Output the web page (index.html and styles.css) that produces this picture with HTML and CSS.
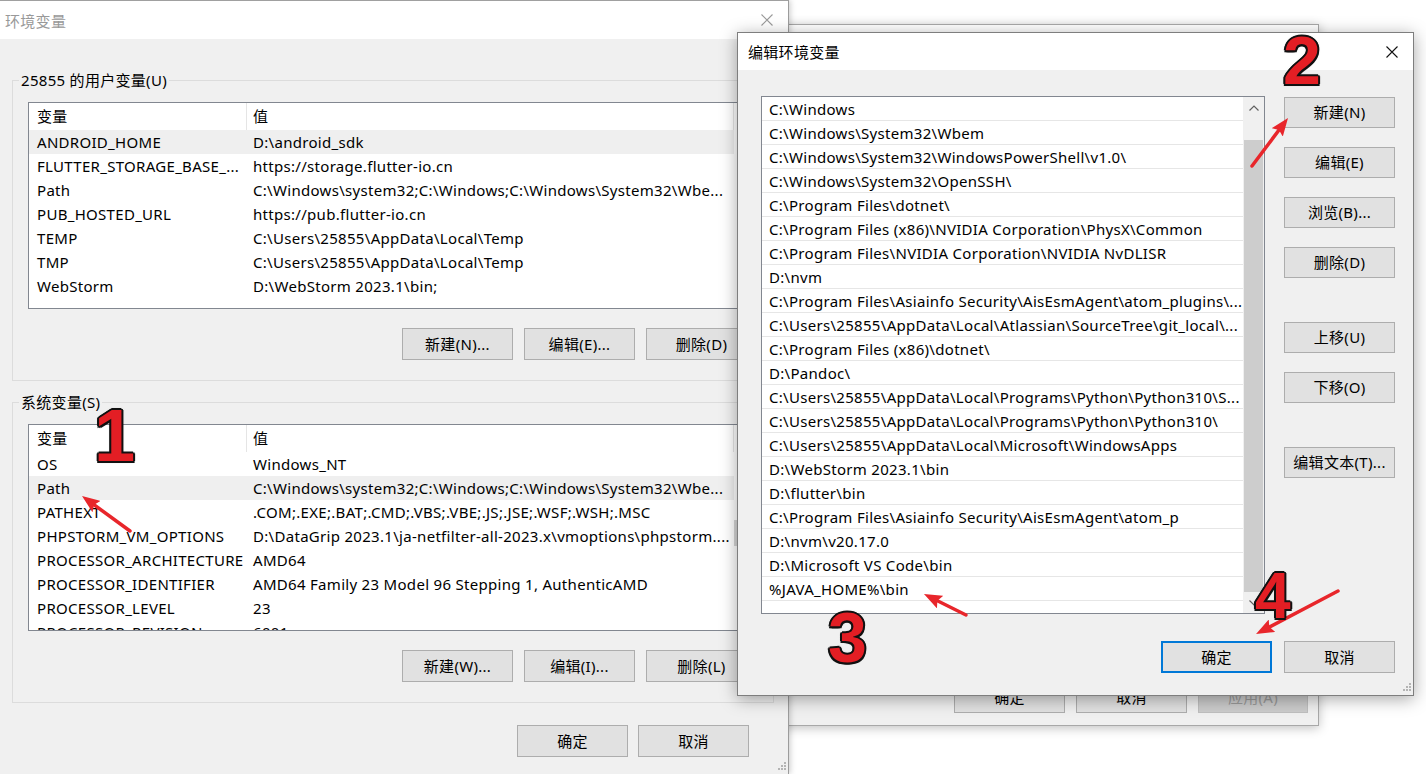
FILE: index.html
```html
<!DOCTYPE html>
<html lang="zh-CN">
<head>
<meta charset="utf-8">
<title>环境变量</title>
<link rel="stylesheet" href="styles.css">
</head>
<body>
<div class="desk">

  <section class="win win-sys">
    <div class="titlebar"></div>
    <div class="sys-body"></div>
    <div class="sys-foot">
      <button class="btn">确定</button>
      <button class="btn">取消</button>
      <button class="btn btn-disabled w110">应用(A)</button>
    </div>
  </section>

  <section class="win win-env">
    <div class="titlebar env-titlebar">
      <span class="title title-inactive">环境变量</span>
      <span class="close"><svg width="12" height="12" viewBox="0 0 12 12"><path d="M0.5 0.5 L11.5 11.5 M11.5 0.5 L0.5 11.5" stroke="#9a9a9a" stroke-width="1.1" fill="none"/></svg></span>
    </div>
    <div class="env-body">
      <div class="group">
        <div class="group-title">25855 的用户变量(U)</div>
        <div class="lv">
          <div class="lv-main">
            <div class="lv-head"><div class="c1">变量</div><div class="c2">值</div></div>
            <div class="lv-row sel"><div class="c1">ANDROID_HOME</div><div class="c2">D:\android_sdk</div></div>
            <div class="lv-row"><div class="c1">FLUTTER_STORAGE_BASE_...</div><div class="c2">https://storage.flutter-io.cn</div></div>
            <div class="lv-row"><div class="c1">Path</div><div class="c2">C:\Windows\system32;C:\Windows;C:\Windows\System32\Wbe...</div></div>
            <div class="lv-row"><div class="c1">PUB_HOSTED_URL</div><div class="c2">https://pub.flutter-io.cn</div></div>
            <div class="lv-row"><div class="c1">TEMP</div><div class="c2">C:\Users\25855\AppData\Local\Temp</div></div>
            <div class="lv-row"><div class="c1">TMP</div><div class="c2">C:\Users\25855\AppData\Local\Temp</div></div>
            <div class="lv-row"><div class="c1">WebStorm</div><div class="c2">D:\WebStorm 2023.1\bin;</div></div>
          </div>
          <div class="lv-sb"></div>
        </div>
        <div class="btnrow">
          <button class="btn">新建(N)...</button>
          <button class="btn">编辑(E)...</button>
          <button class="btn">删除(D)</button>
        </div>
      </div>

      <div class="group group-2">
        <div class="group-title">系统变量(S)</div>
        <div class="lv">
          <div class="lv-main">
            <div class="lv-head"><div class="c1">变量</div><div class="c2">值</div></div>
            <div class="lv-row"><div class="c1">OS</div><div class="c2">Windows_NT</div></div>
            <div class="lv-row sel"><div class="c1">Path</div><div class="c2">C:\Windows\system32;C:\Windows;C:\Windows\System32\Wbe...</div></div>
            <div class="lv-row"><div class="c1">PATHEXT</div><div class="c2">.COM;.EXE;.BAT;.CMD;.VBS;.VBE;.JS;.JSE;.WSF;.WSH;.MSC</div></div>
            <div class="lv-row"><div class="c1">PHPSTORM_VM_OPTIONS</div><div class="c2">D:\DataGrip 2023.1\ja-netfilter-all-2023.x\vmoptions\phpstorm....</div></div>
            <div class="lv-row"><div class="c1">PROCESSOR_ARCHITECTURE</div><div class="c2">AMD64</div></div>
            <div class="lv-row"><div class="c1">PROCESSOR_IDENTIFIER</div><div class="c2">AMD64 Family 23 Model 96 Stepping 1, AuthenticAMD</div></div>
            <div class="lv-row"><div class="c1">PROCESSOR_LEVEL</div><div class="c2">23</div></div>
            <div class="lv-row"><div class="c1">PROCESSOR_REVISION</div><div class="c2">6001</div></div>
          </div>
          <div class="lv-sb"><div class="lv-thumb"></div></div>
        </div>
        <div class="btnrow">
          <button class="btn">新建(W)...</button>
          <button class="btn">编辑(I)...</button>
          <button class="btn">删除(L)</button>
        </div>
      </div>

      <div class="env-foot">
        <button class="btn">确定</button>
        <button class="btn">取消</button>
      </div>
    </div>
    <span class="grip"><svg width="11" height="11" viewBox="0 0 11 11" fill="#b4b4b4"><rect x="9" y="1" width="2" height="2"/><rect x="6" y="4" width="2" height="2"/><rect x="9" y="4" width="2" height="2"/><rect x="3" y="7" width="2" height="2"/><rect x="6" y="7" width="2" height="2"/><rect x="9" y="7" width="2" height="2"/></svg></span>
  </section>

  <section class="win win-edit">
    <div class="titlebar edit-titlebar">
      <span class="title">编辑环境变量</span>
      <span class="close"><svg width="12" height="12" viewBox="0 0 12 12"><path d="M0.5 0.5 L11.5 11.5 M11.5 0.5 L0.5 11.5" stroke="#111" stroke-width="1.1" fill="none"/></svg></span>
    </div>
    <div class="edit-body">
      <div class="edit-top">
        <div class="plist">
          <div class="pitems">
            <div class="pitem">C:\Windows</div>
            <div class="pitem">C:\Windows\System32\Wbem</div>
            <div class="pitem">C:\Windows\System32\WindowsPowerShell\v1.0\</div>
            <div class="pitem">C:\Windows\System32\OpenSSH\</div>
            <div class="pitem">C:\Program Files\dotnet\</div>
            <div class="pitem">C:\Program Files (x86)\NVIDIA Corporation\PhysX\Common</div>
            <div class="pitem">C:\Program Files\NVIDIA Corporation\NVIDIA NvDLISR</div>
            <div class="pitem">D:\nvm</div>
            <div class="pitem">C:\Program Files\Asiainfo Security\AisEsmAgent\atom_plugins\...</div>
            <div class="pitem">C:\Users\25855\AppData\Local\Atlassian\SourceTree\git_local\...</div>
            <div class="pitem">C:\Program Files (x86)\dotnet\</div>
            <div class="pitem">D:\Pandoc\</div>
            <div class="pitem">C:\Users\25855\AppData\Local\Programs\Python\Python310\S...</div>
            <div class="pitem">C:\Users\25855\AppData\Local\Programs\Python\Python310\</div>
            <div class="pitem">C:\Users\25855\AppData\Local\Microsoft\WindowsApps</div>
            <div class="pitem">D:\WebStorm 2023.1\bin</div>
            <div class="pitem">D:\flutter\bin</div>
            <div class="pitem">C:\Program Files\Asiainfo Security\AisEsmAgent\atom_p</div>
            <div class="pitem">D:\nvm\v20.17.0</div>
            <div class="pitem">D:\Microsoft VS Code\bin</div>
            <div class="pitem">%JAVA_HOME%\bin</div>
            <div class="pitem"></div>
          </div>
          <div class="psb">
            <div class="sb-arrow"><svg width="10" height="6" viewBox="0 0 10 6"><path d="M0.5 5.5 L5 1 L9.5 5.5" stroke="#606060" stroke-width="1.2" fill="none"/></svg></div>
            <div class="sb-track"><div class="sb-thumb"></div></div>
            <div class="sb-arrow"><svg width="10" height="6" viewBox="0 0 10 6"><path d="M0.5 0.5 L5 5 L9.5 0.5" stroke="#606060" stroke-width="1.2" fill="none"/></svg></div>
          </div>
        </div>
        <div class="bcol">
          <button class="btn btn-col">新建(N)</button>
          <button class="btn btn-col">编辑(E)</button>
          <button class="btn btn-col">浏览(B)...</button>
          <button class="btn btn-col">删除(D)</button>
          <button class="btn btn-col gap-lg">上移(U)</button>
          <button class="btn btn-col">下移(O)</button>
          <button class="btn btn-col gap-lg">编辑文本(T)...</button>
        </div>
      </div>
      <div class="edit-foot">
        <button class="btn btn-default">确定</button>
        <button class="btn">取消</button>
      </div>
    </div>
    <span class="grip"><svg width="11" height="11" viewBox="0 0 11 11" fill="#b4b4b4"><rect x="9" y="1" width="2" height="2"/><rect x="6" y="4" width="2" height="2"/><rect x="9" y="4" width="2" height="2"/><rect x="3" y="7" width="2" height="2"/><rect x="6" y="7" width="2" height="2"/><rect x="9" y="7" width="2" height="2"/></svg></span>
  </section>

  <svg class="marks" width="1426" height="774" viewBox="0 0 1426 774">
    <defs>
      <marker id="ah" markerUnits="userSpaceOnUse" viewBox="0 0 18 14" markerWidth="18" markerHeight="14" refX="8" refY="7" orient="auto">
        <path d="M0 0 L18 7 L0 14 L3 7 Z" fill="#e8262b"/>
      </marker>
    </defs>
    <g stroke="#e8262b" stroke-width="3.5" stroke-linecap="round" fill="none">
      <line x1="130" y1="531" x2="90.1" y2="501.9" marker-end="url(#ah)"/>
      <line x1="1252" y1="166" x2="1282" y2="126" marker-end="url(#ah)"/>
      <line x1="966" y1="615" x2="932.9" y2="598.5" marker-end="url(#ah)"/>
      <line x1="1338" y1="591" x2="1264.9" y2="629.4" marker-end="url(#ah)"/>
    </g>
  </svg>
  <span class="num n1">1</span>
  <span class="num n2">2</span>
  <span class="num n3">3</span>
  <span class="num n4">4</span>
</div>
</body>
</html>
```
FILE: styles.css
```css
html, body {
  margin: 0;
  padding: 0;
}
body {
  width: 1426px;
  height: 774px;
  overflow: hidden;
  background: #ffffff;
  font-family: "Noto Sans", "Noto Sans CJK SC", sans-serif;
  font-size: 15px;
  letter-spacing: 0.3px;
  color: #000;
}
.desk {
  position: relative;
  width: 1426px;
  height: 774px;
  overflow: hidden;
}

/* generic window */
.win {
  position: absolute;
  box-sizing: border-box;
  background: #f0f0f0;
  display: flex;
  flex-direction: column;
}
.titlebar {
  background: #fff;
  display: flex;
  align-items: center;
  flex: none;
}
.title {
  flex: 1;
  white-space: nowrap;
}
.title-inactive {
  color: #999;
}
.close {
  width: 42px;
  height: 100%;
  display: flex;
  align-items: center;
  justify-content: center;
}
.grip {
  position: absolute;
  right: 2px;
  bottom: 2px;
  width: 11px;
  height: 11px;
  line-height: 0;
}

/* buttons */
.btn {
  box-sizing: border-box;
  width: 111px;
  height: 32px;
  padding: 0;
  margin: 0;
  border: 1px solid #adadad;
  background: #e1e1e1;
  font-family: inherit;
  font-size: 15px;
  letter-spacing: 0.3px;
  color: #000;
  line-height: 1;
  white-space: nowrap;
  display: flex;
  align-items: center;
  justify-content: center;
  flex: none;
}
.w110 { width: 110px; }
.btn-disabled {
  background: #cccccc;
  border-color: #bfbfbf;
  color: #9a9a9a;
}
.btn-default {
  border: 2px solid #0078d7;
}

/* background window (system properties) */
.win-sys {
  left: 700px;
  top: 24px;
  width: 619px;
  height: 702px;
  border: 1px solid #a8a8a8;
  box-shadow: 0 2px 10px rgba(0, 0, 0, 0.25);
  z-index: 1;
}
.win-sys .titlebar { height: 38px; }
.sys-body { flex: 1; }
.sys-foot {
  display: flex;
  justify-content: flex-end;
  gap: 11px;
  padding: 0 10px 12px 0;
}

/* environment variables window */
.win-env {
  left: 0;
  top: 0;
  width: 789px;
  height: 774px;
  border-top: 1px solid #a0a0a0;
  border-right: 1px solid #9c9c9c;
  box-shadow: 1px 0 6px rgba(0, 0, 0, 0.22);
  z-index: 2;
}
.env-titlebar {
  height: 38px;
  padding-left: 5px;
}
.env-body {
  padding: 41px 14px 0 12px;
}
.group {
  border: 1px solid #dcdcdc;
  padding: 0 16px 20px 15px;
}
.group-2 { margin-top: 21px; }
.group-title {
  width: max-content;
  margin: -11px 0 0 -9px;
  padding: 0 2px;
  background: #f0f0f0;
  line-height: 20px;
  white-space: nowrap;
}
.lv {
  box-sizing: border-box;
  margin-top: 12px;
  height: 207px;
  border: 1px solid #828790;
  background: #fff;
  display: flex;
  overflow: hidden;
}
.lv-main {
  flex: 1;
  min-width: 0;
}
.lv-head {
  display: flex;
  height: 27px;
  line-height: 27px;
}
.lv-row {
  display: flex;
  height: 24px;
  line-height: 24px;
}
.lv-row.sel { background: #efefef; }
.c1 {
  box-sizing: border-box;
  width: 218px;
  padding-left: 8px;
  white-space: nowrap;
  overflow: hidden;
  flex: none;
}
.c2 {
  box-sizing: border-box;
  flex: 1;
  min-width: 0;
  padding-left: 6px;
  white-space: nowrap;
  overflow: hidden;
}
.lv-head .c1,
.lv-head .c2 {
  border-right: 1px solid #e5e5e5;
}
.lv-sb {
  width: 22px;
  flex: none;
  background: #fff;
}
.lv-thumb {
  margin-top: 95px;
  height: 26px;
  width: 3px;
  background: #d6d6d6;
}
.btnrow {
  display: flex;
  justify-content: flex-end;
  gap: 11px;
  margin-top: 19px;
}
.env-foot {
  display: flex;
  justify-content: flex-end;
  gap: 10px;
  margin-top: 22px;
  padding-right: 25px;
}

/* edit dialog */
.win-edit {
  left: 737px;
  top: 32px;
  width: 677px;
  height: 664px;
  border: 1px solid #7e7e7e;
  box-shadow: 0 3px 16px rgba(0, 0, 0, 0.35);
  z-index: 3;
}
.edit-titlebar {
  height: 37px;
  padding-left: 10px;
}
.edit-body {
  padding: 26px 18px 0 23px;
}
.edit-top {
  display: flex;
  align-items: flex-start;
}
.plist {
  box-sizing: border-box;
  width: 504px;
  height: 518px;
  border: 1px solid #828790;
  background: #fff;
  display: flex;
  overflow: hidden;
  flex: none;
}
.pitems {
  flex: 1;
  min-width: 0;
}
.pitem {
  box-sizing: border-box;
  height: 24px;
  line-height: 24px;
  padding-left: 7px;
  border-bottom: 1px solid #e6e6e6;
  white-space: nowrap;
  overflow: hidden;
}
.psb {
  width: 21px;
  flex: none;
  background: #f0f0f0;
  display: flex;
  flex-direction: column;
}
.sb-arrow {
  height: 21px;
  display: flex;
  align-items: center;
  justify-content: center;
  flex: none;
}
.sb-track {
  flex: 1;
  padding-top: 22px;
  display: flex;
}
.sb-thumb {
  flex: 1;
  margin: 0 1px;
  background: #cdcdcd;
}
.bcol {
  display: flex;
  flex-direction: column;
  margin-left: 19px;
  padding-top: 1px;
}
.btn-col {
  height: 31px;
  margin-bottom: 19px;
}
.btn-col.gap-lg { margin-top: 25px; }
.edit-foot {
  display: flex;
  justify-content: flex-end;
  gap: 12px;
  margin-top: 27px;
}

/* annotations */
.marks {
  position: absolute;
  left: 0;
  top: 0;
  z-index: 10;
  pointer-events: none;
}
.num {
  position: absolute;
  z-index: 11;
  font-family: "Liberation Sans", Arial, sans-serif;
  font-weight: 700;
  line-height: 1;
  letter-spacing: 0;
  color: #e31e24;
  text-shadow:
    2px 0 0 #111, -2px 0 0 #111, 0 2px 0 #111, 0 -2px 0 #111,
    1.5px 1.5px 0 #111, -1.5px 1.5px 0 #111, 1.5px -1.5px 0 #111, -1.5px -1.5px 0 #111,
    0 0 3px rgba(0, 0, 0, 0.5);
}
.n1 { left: 94px; top: 399px; font-size: 74px; }
.n2 { left: 1283px; top: 26px; font-size: 68px; }
.n3 { left: 828px; top: 603px; font-size: 70px; }
.n4 { left: 1255px; top: 564px; font-size: 64px; }
```
